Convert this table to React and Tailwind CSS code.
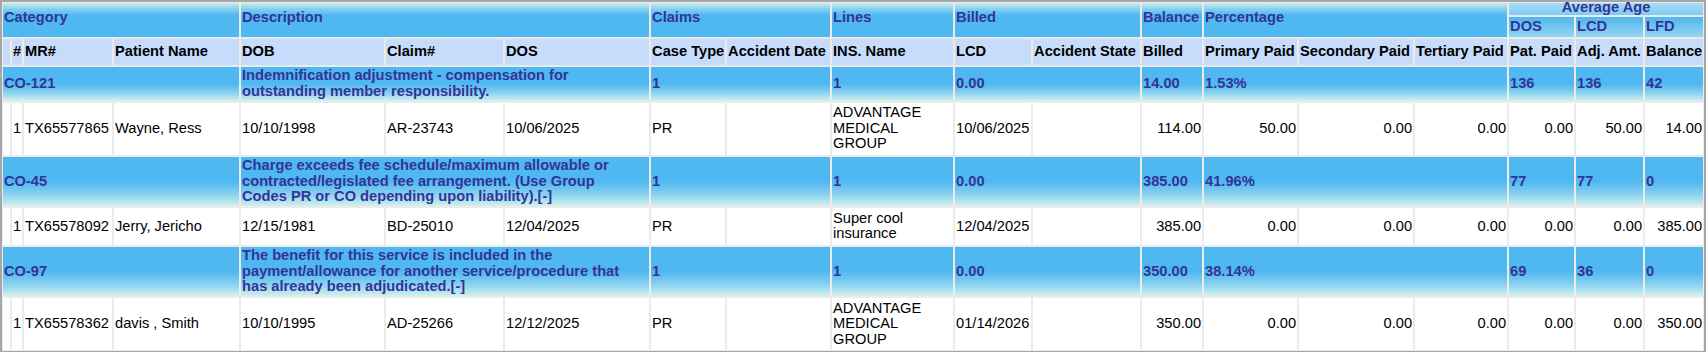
import React from "react";

const cols = [7, 10, 88, 125, 143, 117, 144, 74, 103, 121, 76, 107, 60, 93, 114, 92, 65, 67, 58];

const hdr =
    "bg-[linear-gradient(to_bottom,#cdeeea_0px,#8fd4ee_5px,#50b8f0_12px,#50b8f0_100%)] text-[#333399] font-bold text-left align-top pt-[7px] px-px whitespace-nowrap";
const ageTop =
    "bg-[linear-gradient(to_bottom,#a6ddf5,#7fcbf2)] text-[#333399] font-bold text-center h-[12px] leading-[12px] p-0 whitespace-nowrap";
const ageSub =
    "bg-[linear-gradient(to_bottom,#50b6ee,#93d6f0)] text-[#333399] font-bold text-left py-[2.2px] px-px";
const sub = "bg-[#c6dcfa] text-black font-bold text-left py-[5px] px-px whitespace-nowrap";
const cat =
    "bg-[linear-gradient(to_bottom,#50b8f0_0%,#50b8f0_50%,#8ed3ef_78%,#d2f1ec_100%)] text-[#333399] font-bold text-left align-middle py-[1.5px] px-px";
const cell = "bg-white text-black py-[2.5px] px-px align-middle";
const num = cell + " text-right";

const groups = [
    {
        code: "CO-121",
        desc: "Indemnification adjustment - compensation for outstanding member responsibility.",
        claims: "1",
        lines: "1",
        billed: "0.00",
        balance: "14.00",
        pct: "1.53%",
        dos: "136",
        lcd: "136",
        lfd: "42",
        rows: [
            ["1", "TX65577865", "Wayne, Ress", "10/10/1998", "AR-23743", "10/06/2025", "PR", "", "ADVANTAGE MEDICAL GROUP", "10/06/2025", "", "114.00", "50.00", "0.00", "0.00", "0.00", "50.00", "14.00"],
        ],
    },
    {
        code: "CO-45",
        desc: "Charge exceeds fee schedule/maximum allowable or contracted/legislated fee arrangement. (Use Group Codes PR or CO depending upon liability).[-]",
        claims: "1",
        lines: "1",
        billed: "0.00",
        balance: "385.00",
        pct: "41.96%",
        dos: "77",
        lcd: "77",
        lfd: "0",
        rows: [
            ["1", "TX65578092", "Jerry, Jericho", "12/15/1981", "BD-25010", "12/04/2025", "PR", "", "Super cool insurance", "12/04/2025", "", "385.00", "0.00", "0.00", "0.00", "0.00", "0.00", "385.00"],
        ],
    },
    {
        code: "CO-97",
        desc: "The benefit for this service is included in the payment/allowance for another service/procedure that has already been adjudicated.[-]",
        claims: "1",
        lines: "1",
        billed: "0.00",
        balance: "350.00",
        pct: "38.14%",
        dos: "69",
        lcd: "36",
        lfd: "0",
        rows: [
            ["1", "TX65578362", "davis , Smith", "10/10/1995", "AD-25266", "12/12/2025", "PR", "", "ADVANTAGE MEDICAL GROUP", "01/14/2026", "", "350.00", "0.00", "0.00", "0.00", "0.00", "0.00", "350.00"],
        ],
    },
];

function DataRow({ r }) {
    return (
        <tr>
            <td className={cell}></td>
            <td className={num}>{r[0]}</td>
            <td className={cell}>{r[1]}</td>
            <td className={cell}>{r[2]}</td>
            <td className={cell}>{r[3]}</td>
            <td className={cell}>{r[4]}</td>
            <td className={cell}>{r[5]}</td>
            <td className={cell}>{r[6]}</td>
            <td className={cell}>{r[7]}</td>
            <td className={cell}>{r[8]}</td>
            <td className={cell}>{r[9]}</td>
            <td className={cell}>{r[10]}</td>
            {r.slice(11).map((v, i) => (
                <td key={i} className={num}>
                    {v}
                </td>
            ))}
        </tr>
    );
}

export default function App() {
    return (
        <div
            className="w-[1708px] h-[352px] overflow-hidden bg-white text-[14.67px] leading-[15.6px]"
            style={{ fontFamily: '"Liberation Sans", Arial, sans-serif' }}
        >
            <div className="w-[1706px] border-2 border-[#a6a6a6] overflow-hidden">
                <table className="table-fixed w-[1704px] -m-px border-separate border-spacing-[2px] bg-[#ebebeb]">
                    <colgroup>
                        {cols.map((w, i) => (
                            <col key={i} style={{ width: w }} />
                        ))}
                    </colgroup>
                    <thead>
                        <tr>
                            <th rowSpan={2} colSpan={4} className={hdr}>Category</th>
                            <th rowSpan={2} colSpan={3} className={hdr}>Description</th>
                            <th rowSpan={2} colSpan={2} className={hdr}>Claims</th>
                            <th rowSpan={2} className={hdr}>Lines</th>
                            <th rowSpan={2} colSpan={2} className={hdr}>Billed</th>
                            <th rowSpan={2} className={hdr}>Balance</th>
                            <th rowSpan={2} colSpan={3} className={hdr}>Percentage</th>
                            <th colSpan={3} className={ageTop}>
                                <span className="relative -top-[2px]">Average Age</span>
                            </th>
                        </tr>
                        <tr>
                            <th className={ageSub}>DOS</th>
                            <th className={ageSub}>LCD</th>
                            <th className={ageSub}>LFD</th>
                        </tr>
                        <tr>
                            <th className={sub}></th>
                            <th className={sub}>#</th>
                            <th className={sub}>MR#</th>
                            <th className={sub}>Patient Name</th>
                            <th className={sub}>DOB</th>
                            <th className={sub}>Claim#</th>
                            <th className={sub}>DOS</th>
                            <th className={sub}>Case Type</th>
                            <th className={sub}>Accident Date</th>
                            <th className={sub}>INS. Name</th>
                            <th className={sub}>LCD</th>
                            <th className={sub}>Accident State</th>
                            <th className={sub}>Billed</th>
                            <th className={sub}>Primary Paid</th>
                            <th className={sub}>Secondary Paid</th>
                            <th className={sub}>Tertiary Paid</th>
                            <th className={sub}>Pat. Paid</th>
                            <th className={sub}>Adj. Amt.</th>
                            <th className={sub}>Balance</th>
                        </tr>
                    </thead>
                    <tbody>
                        {groups.map((g) => (
                            <React.Fragment key={g.code}>
                                <tr>
                                    <td colSpan={4} className={cat}>{g.code}</td>
                                    <td colSpan={3} className={cat + " pr-[6px]"}>{g.desc}</td>
                                    <td colSpan={2} className={cat}>{g.claims}</td>
                                    <td className={cat}>{g.lines}</td>
                                    <td colSpan={2} className={cat}>{g.billed}</td>
                                    <td className={cat}>{g.balance}</td>
                                    <td colSpan={3} className={cat}>{g.pct}</td>
                                    <td className={cat}>{g.dos}</td>
                                    <td className={cat}>{g.lcd}</td>
                                    <td className={cat}>{g.lfd}</td>
                                </tr>
                                {g.rows.map((r, i) => (
                                    <DataRow key={i} r={r} />
                                ))}
                            </React.Fragment>
                        ))}
                    </tbody>
                </table>
            </div>
        </div>
    );
}
